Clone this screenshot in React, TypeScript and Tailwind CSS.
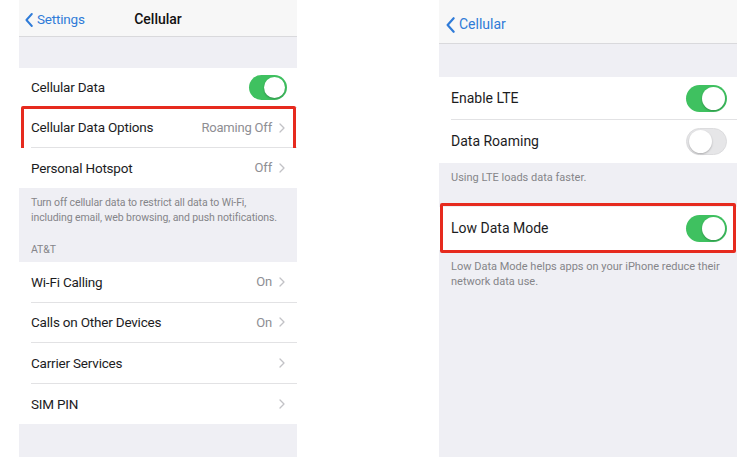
import React from "react";

const font = { fontFamily: "Roboto, 'Liberation Sans', sans-serif" };

function Chevron() {
  return (
    <svg width="6" height="10" viewBox="0 0 6 10" className="ml-[7px]">
      <path d="M1 1l4 4-4 4" fill="none" stroke="#c2c2c6" strokeWidth="1.3" strokeLinecap="round" strokeLinejoin="round" />
    </svg>
  );
}

function BackChevron({ w, h }: { w: number; h: number }) {
  return (
    <svg width={w} height={h} viewBox="0 0 10 18">
      <path d="M8.5 1.5L1.8 9l6.7 7.5" fill="none" stroke="#2f7bd8" strokeWidth="2.4" strokeLinecap="round" strokeLinejoin="round" />
    </svg>
  );
}

function Toggle({ on, big }: { on: boolean; big?: boolean }) {
  const size = big ? "w-[41px] h-[27px]" : "w-[38px] h-[25px]";
  const knob = big ? "w-[23px] h-[23px]" : "w-[21px] h-[21px]";
  return (
    <div
      className={`${size} rounded-full p-[2px] flex items-center ${
        on ? "bg-[#3fc160] justify-end" : "bg-[#e6e6e8] justify-start border border-[#dcdcde]"
      }`}
    >
      <div className={`${knob} rounded-full bg-white shadow-[0_1px_2px_rgba(0,0,0,0.25)]`} />
    </div>
  );
}

function LRow({
  label,
  value,
  chevron,
  toggle,
  last,
  h = "h-[40px]",
  children,
}: {
  label: string;
  value?: string;
  chevron?: boolean;
  toggle?: boolean;
  last?: boolean;
  h?: string;
  children?: React.ReactNode;
}) {
  return (
    <div className={`relative ${h} bg-white pl-[12px]`}>
      <div className={`h-full flex items-center pr-[12px] ${last ? "" : "border-b border-[#e2e2e4]"}`}>
        <span className="flex-1 text-[13.5px] tracking-[-0.2px] text-[#1c1c1e]">{label}</span>
        {value && <span className="text-[13px] tracking-[-0.2px] text-[#8e8e93]">{value}</span>}
        {chevron && <Chevron />}
        {toggle && <div className="-mr-[2px]"><Toggle on /></div>}
      </div>
      {children}
    </div>
  );
}

function RRow({ label, on, last }: { label: string; on: boolean; last?: boolean }) {
  return (
    <div className="h-[43px] bg-white pl-[12px]">
      <div className={`h-full flex items-center pr-[10px] ${last ? "" : "border-b border-[#e2e2e4]"}`}>
        <span className="flex-1 text-[14px] text-[#1c1c1e]">{label}</span>
        <Toggle on={on} big />
      </div>
    </div>
  );
}

export default function App() {
  return (
    <div className="w-[755px] h-[457px] bg-white flex overflow-hidden" style={font}>
      {/* Left phone */}
      <div className="ml-[19px] w-[278px] h-full bg-[#efeff4] flex flex-col">
        <div className="h-[37px] pt-[3px] bg-[#f7f7f7] border-b border-[#d9d9dc] grid grid-cols-[1fr_auto_1fr] items-center">
          <div className="flex items-center pl-[6px] gap-[4px]">
            <BackChevron w={8} h={16} />
            <span className="text-[13.5px] text-[#2f7bd8] tracking-[-0.2px]">Settings</span>
          </div>
          <span className="text-[14px] font-medium text-[#111]">Cellular</span>
          <div />
        </div>
        <div className="h-[31px]" />
        <LRow label="Cellular Data" toggle />
        <LRow label="Cellular Data Options" value="Roaming Off" chevron>
          <div className="absolute -top-[2px] -bottom-[4px] left-[2px] right-[1px] border-[3px] border-[#e62a1e] rounded-[2px]" />
        </LRow>
        <LRow label="Personal Hotspot" value="Off" chevron last />
        <div className="h-[74px] px-[12px] pt-[7px] text-[10.5px] leading-[15px] text-[#858589] tracking-[-0.1px]">
          <p>Turn off cellular data to restrict all data to Wi-Fi,</p>
          <p>including email, web browsing, and push notifications.</p>
          <p className="mt-[17px]">AT&amp;T</p>
        </div>
        <LRow h="h-[40.5px]" label="Wi-Fi Calling" value="On" chevron />
        <LRow h="h-[40.5px]" label="Calls on Other Devices" value="On" chevron />
        <LRow h="h-[40.5px]" label="Carrier Services" chevron />
        <LRow h="h-[40.5px]" label="SIM PIN" chevron last />
      </div>

      <div className="w-[142px]" />

      {/* Right phone */}
      <div className="w-[298px] h-full bg-[#efeff4] flex flex-col">
        <div className="h-[44px] pt-[6px] bg-[#f7f7f7] border-b border-[#d9d9dc] flex items-center pl-[7px] gap-[4px]">
          <BackChevron w={9} h={18} />
          <span className="text-[14px] text-[#2f7bd8]">Cellular</span>
        </div>
        <div className="h-[33px]" />
        <RRow label="Enable LTE" on />
        <RRow label="Data Roaming" on={false} last />
        <div className="h-[44px] px-[12px] pt-[7px] text-[11px] leading-[15px] text-[#858589]">
          Using LTE loads data faster.
        </div>
        <div className="relative">
          <RRow label="Low Data Mode" on last />
          <div className="absolute -top-[4px] -bottom-[3px] left-[1px] right-[1px] border-[3px] border-[#e62a1e] rounded-[2px]" />
        </div>
        <div className="px-[12px] pt-[9px] text-[11px] leading-[15px] text-[#858589]">
          <p>Low Data Mode helps apps on your iPhone reduce their</p>
          <p>network data use.</p>
        </div>
      </div>
    </div>
  );
}
